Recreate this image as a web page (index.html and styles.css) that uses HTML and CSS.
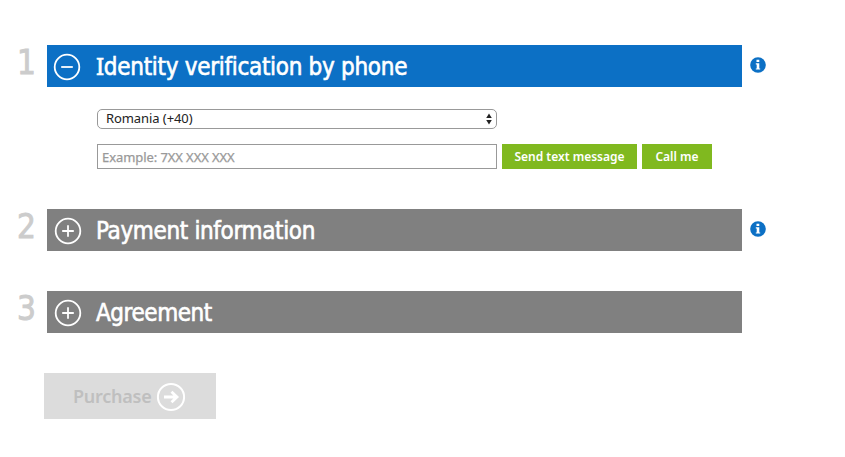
FILE: index.html
```html
<!DOCTYPE html>
<html lang="en">
<head>
<meta charset="utf-8">
<title>Identity verification by phone</title>
<link rel="stylesheet" href="styles.css">
</head>
<body>
<main class="signup">
  <section class="step step-open">
    <span class="number">1</span>
    <h2 class="bar bar-active">
      <svg class="toggle" viewBox="0 0 28 28"><circle cx="14" cy="14" r="12.3"/><path d="M8.2 14h11.6"/></svg>
      <span class="title title-identity"><span class="initial">I</span>dentity verification by phone</span>
    </h2>
    <svg class="info" viewBox="0 0 16 16"><circle cx="8" cy="8" r="7.8"/><path d="M6.5 2.8h2.8v2.3H6.5zM5.8 6.2h3.5v5.2h.9v1.2H5.8v-1.2h.9v-4h-.9z"/></svg>
    <form class="phone">
      <div class="select"><span>Romania (+40)</span><svg class="arrows" viewBox="0 0 6 12"><path d="M3 .5 5.8 5H.2zM3 11.5.2 7h5.6z"/></svg></div>
      <div class="row">
        <div class="input">Example: 7XX XXX XXX</div>
        <button type="button" class="btn btn-text"><span>Send text message</span></button>
        <button type="button" class="btn btn-call"><span>Call me</span></button>
      </div>
    </form>
  </section>
  <section class="step">
    <span class="number">2</span>
    <h2 class="bar">
      <svg class="toggle" viewBox="0 0 28 28"><circle cx="14" cy="14" r="12.3"/><path d="M8.2 14h11.6M14 8.2v11.6"/></svg>
      <span class="title title-payment">Payment information</span>
    </h2>
    <svg class="info" viewBox="0 0 16 16"><circle cx="8" cy="8" r="7.8"/><path d="M6.5 2.8h2.8v2.3H6.5zM5.8 6.2h3.5v5.2h.9v1.2H5.8v-1.2h.9v-4h-.9z"/></svg>
  </section>
  <section class="step">
    <span class="number">3</span>
    <h2 class="bar">
      <svg class="toggle" viewBox="0 0 28 28"><circle cx="14" cy="14" r="12.3"/><path d="M8.2 14h11.6M14 8.2v11.6"/></svg>
      <span class="title title-agreement">Agreement</span>
    </h2>
  </section>
  <button type="button" class="purchase" disabled>
    <span class="purchase-label">Purchase</span>
    <svg class="go" viewBox="0 0 30 30"><circle cx="15" cy="15" r="13.1"/><path class="shaft" d="M8 15h13M15.5 9.8l5.5 5.2-5.5 5.2"/></svg>
  </button>
</main>
</body>
</html>
```

FILE: styles.css
```css
* { box-sizing: border-box; }
body { margin: 0; background: #fff; font-family: "Noto Sans", sans-serif; }
.signup { padding: 45px 0 0 14px; }
.step {
  display: grid;
  grid-template-columns: 33px 695px 16px;
  column-gap: 0;
  align-items: center;
  min-height: 42px;
  margin-bottom: 40px;
}
.number {
  width: 25px;
  height: 42px;
  font: 33px/36px "DejaVu Sans Condensed", "DejaVu Sans", sans-serif;
  text-align: center;
  color: #ccc;
  -webkit-text-stroke: .9px #ccc;
}
.bar {
  display: flex;
  align-items: center;
  height: 42px;
  margin: 0;
  padding-left: 7px;
  background: #808080;
  color: #fff;
  font: 400 24px/42px "DejaVu Sans Condensed", "DejaVu Sans", sans-serif;
  white-space: nowrap;
}
.bar-active { padding-left: 6px; background: #0c70c5; }
.toggle { width: 28px; height: 28px; margin-top: 1px; fill: none; stroke: #fff; stroke-width: 1.8; }
.title { margin: 2px 0 0 14px; letter-spacing: -.36px; -webkit-text-stroke: .6px #fff; }
.title-identity { margin-left: 15px; letter-spacing: -.3px; }
.title-agreement { letter-spacing: -.45px; }
.initial { font-family: "Noto Sans", sans-serif; line-height: 1; }
.info { width: 16px; height: 16px; margin-left: 8px; margin-top: -2px; fill: #0c70c5; }
.info path { fill: #fff; }
.phone { grid-column: 2 / 4; margin: 22px 0 0 50px; }
.select {
  display: flex;
  align-items: center;
  justify-content: space-between;
  width: 400px;
  height: 20px;
  padding: 0 4px 0 8px;
  border: 1px solid #999;
  border-radius: 5px;
  font-size: 13px;
  line-height: 16px;
  letter-spacing: -.08px;
  color: #222;
}
.select span { margin-top: -2px; }
.arrows { width: 6px; height: 12px; fill: #222; }
.row { display: flex; gap: 5px; margin-top: 15px; }
.input {
  width: 400px;
  height: 25px;
  padding-left: 4px;
  border: 1px solid #999;
  font-size: 13px;
  line-height: 25px;
  letter-spacing: -.08px;
  color: #999;
  -webkit-text-stroke: .25px #999;
}
.btn {
  height: 25px;
  padding: 0;
  border: 0;
  background: #80b91f;
  color: #fff;
  font: 600 12px/25px "Noto Sans", sans-serif;
  white-space: nowrap;
}
.btn-text { width: 135px; }
.btn-call { width: 70px; }
.purchase {
  display: flex;
  align-items: center;
  width: 172px;
  height: 46px;
  margin-left: 30px;
  padding: 0 0 0 29px;
  border: 0;
  background: #dcdcdc;
  color: #bfbfbf;
  font: 600 18px/46px "Noto Sans", sans-serif;
}
.purchase-label { margin-top: -1px; letter-spacing: -.25px; }
.go { width: 30px; height: 30px; margin-left: 5px; margin-top: 1px; fill: none; stroke: #fff; stroke-width: 2; }
.shaft { stroke-width: 2.8; }
```
